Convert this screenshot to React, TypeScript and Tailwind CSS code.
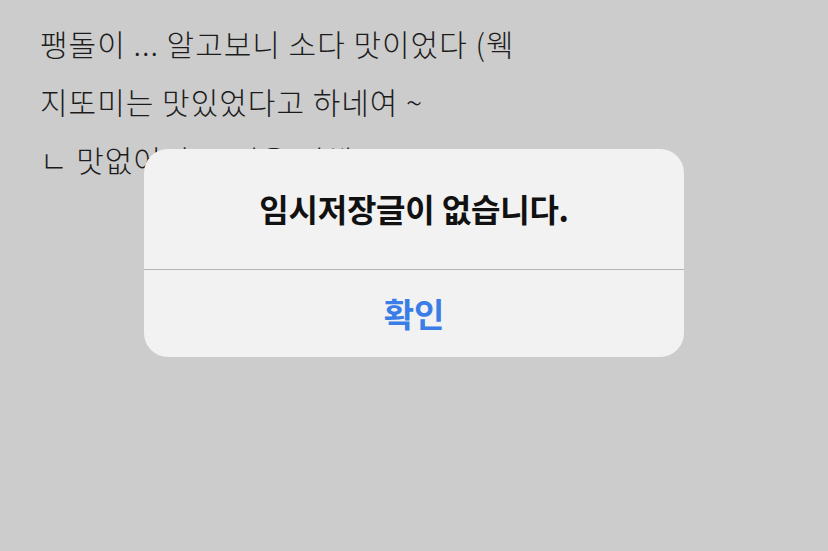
export default function App() {
  const lines = [
    "팽돌이 ... 알고보니 소다 맛이었다 (웩",
    "지또미는 맛있었다고 하네여 ~",
    "ㄴ 맛없어서 ... 먹을 뻔해",
  ];

  return (
    <div
      className="relative h-[551px] w-[828px] overflow-hidden bg-[#cccccc]"
      style={{ fontFamily: '"Noto Sans CJK KR", "Noto Sans", sans-serif' }}
    >
      <div className="flex flex-col gap-[14px] pl-[40px] pt-[21px] text-[30px] font-light leading-[44px] tracking-[1px] text-[#1c1c1c]">
        {lines.map((line) => (
          <div key={line} className="whitespace-nowrap">
            {line}
          </div>
        ))}
      </div>

      <div className="absolute left-[144px] top-[149px] w-[540px] overflow-hidden rounded-[24px] bg-[#f2f2f2]">
        <div className="flex h-[120px] items-center justify-center pb-[2px]">
          <span className="text-[32px] font-bold tracking-[-0.2px] text-[#111111]">
            임시저장글이 없습니다.
          </span>
        </div>
        <div className="h-px bg-[#b4b4b4]" />
        <div className="flex h-[87px] items-center justify-center">
          <span className="text-[33px] font-bold text-[#3a7de6]">확인</span>
        </div>
      </div>
    </div>
  );
}
